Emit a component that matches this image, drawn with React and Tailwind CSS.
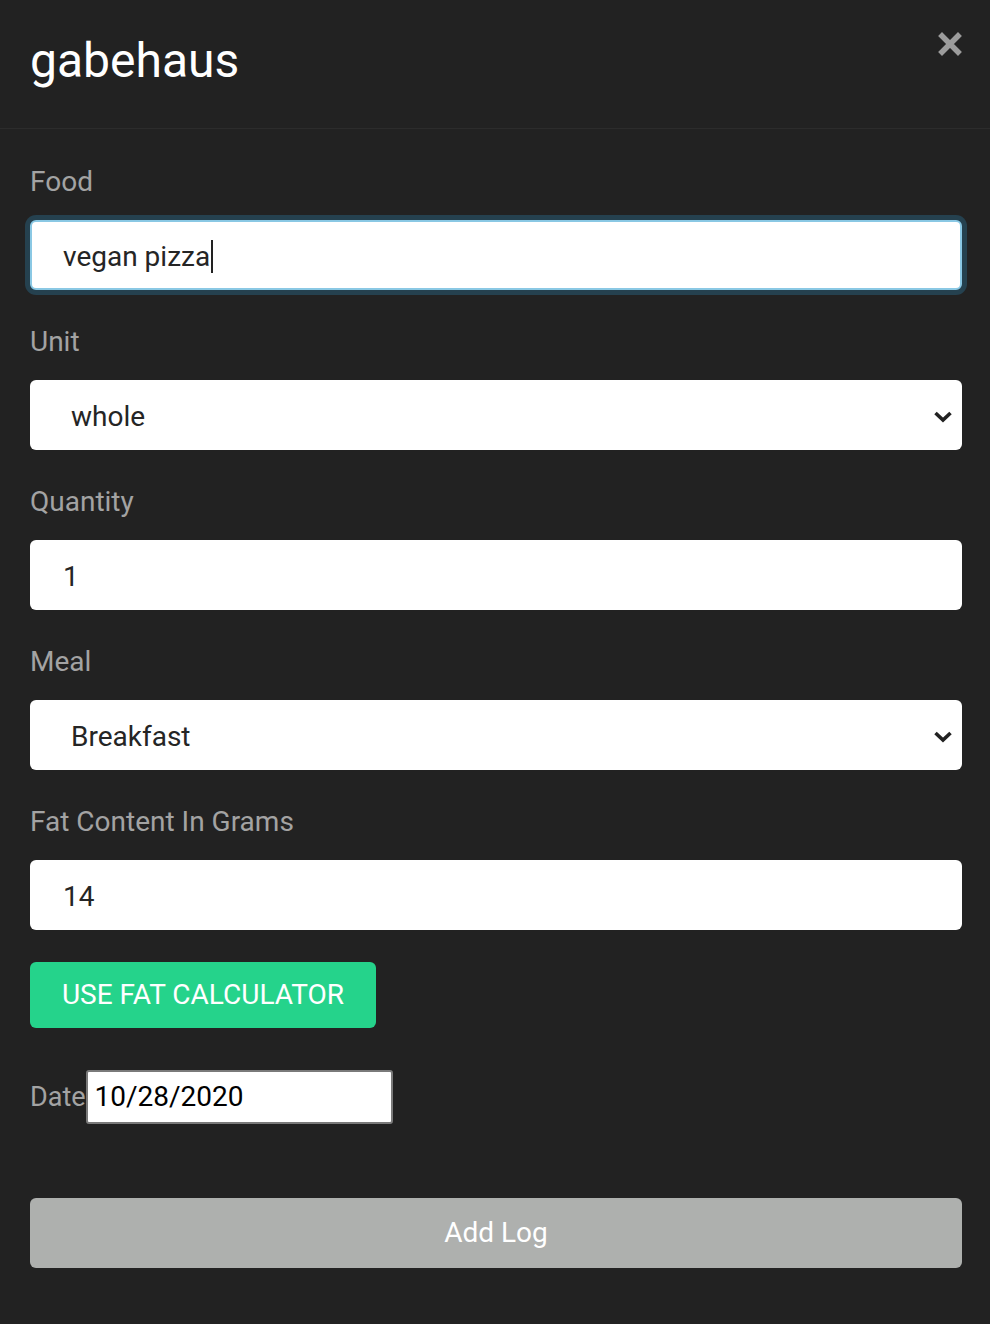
import React from 'react';

const font = { fontFamily: 'Roboto, "Liberation Sans", sans-serif' };

const Chevron = () => (
    <svg width="20" height="13" viewBox="0 0 20 13" className="shrink-0">
        <path d="M2.5 3 L10 10 L17.5 3" fill="none" stroke="#222" strokeWidth="3.6" />
    </svg>
);

const Field = ({ label, children }) => (
    <div className="mb-[30px]">
        <div className="text-[28px] leading-[44px] text-[#a3a3a3] mb-4">{label}</div>
        {children}
    </div>
);

const TextBox = ({ value, focused }) => (
    <div
        className={
            focused
                ? "h-[70px] flex items-center bg-white rounded-md pl-[31px] pt-[3px] text-[28px] text-[#252525] border-2 border-[#8ac8e4] ring-[5px] ring-[#25414f]"
                : "h-[70px] flex items-center bg-white rounded-md pl-[33px] pt-[3px] text-[28px] text-[#252525]"
        }
    >
        <span>{value}</span>
        {focused && <span className="inline-block w-[2px] h-[33px] bg-[#222] ml-[1px]" />}
    </div>
);

const SelectBox = ({ value }) => (
    <div className="h-[70px] flex items-center justify-between bg-white rounded-md pl-[41px] pr-[9px] pt-[3px] text-[28px] text-[#252525]">
        <span>{value}</span>
        <Chevron />
    </div>
);

export default function App() {
    return (
        <div className="min-h-[1324px] bg-[#222222]" style={font}>
            <div className="h-[129px] border-b border-[#2c2c2c] flex items-start justify-between pl-[30px] pr-[28px]">
                <h1 className="text-[48px] leading-none text-white mt-[37px]">gabehaus</h1>
                <svg width="24" height="24" viewBox="0 0 24 24" className="mt-[32px]">
                    <path d="M4 4 L20 20 M20 4 L4 20" stroke="#9c9c9c" strokeWidth="5.5" strokeLinecap="square" />
                </svg>
            </div>

            <div className="pl-[30px] pr-[28px] pt-[31px]">
                <Field label="Food">
                    <TextBox value="vegan pizza" focused />
                </Field>
                <Field label="Unit">
                    <SelectBox value="whole" />
                </Field>
                <Field label="Quantity">
                    <TextBox value="1" />
                </Field>
                <Field label="Meal">
                    <SelectBox value="Breakfast" />
                </Field>
                <Field label="Fat Content In Grams">
                    <TextBox value="14" />
                </Field>

                <button className="mt-[2px] h-[66px] w-[346px] rounded-md bg-[#25d38b] text-white text-[28px] uppercase">
                    Use Fat Calculator
                </button>

                <div className="mt-[42px] flex items-center">
                    <span className="text-[27px] text-[#a3a3a3]">Date</span>
                    <div className="w-[307px] h-[54px] border-2 border-[#7a7a7a] rounded-[3px] bg-white flex items-center pl-[7px] text-[28px] text-black">
                        10/28/2020
                    </div>
                </div>

                <button className="mt-[74px] w-full h-[70px] rounded-md bg-[#aeb0ae] text-white text-[28px]">
                    Add Log
                </button>
            </div>
        </div>
    );
}
